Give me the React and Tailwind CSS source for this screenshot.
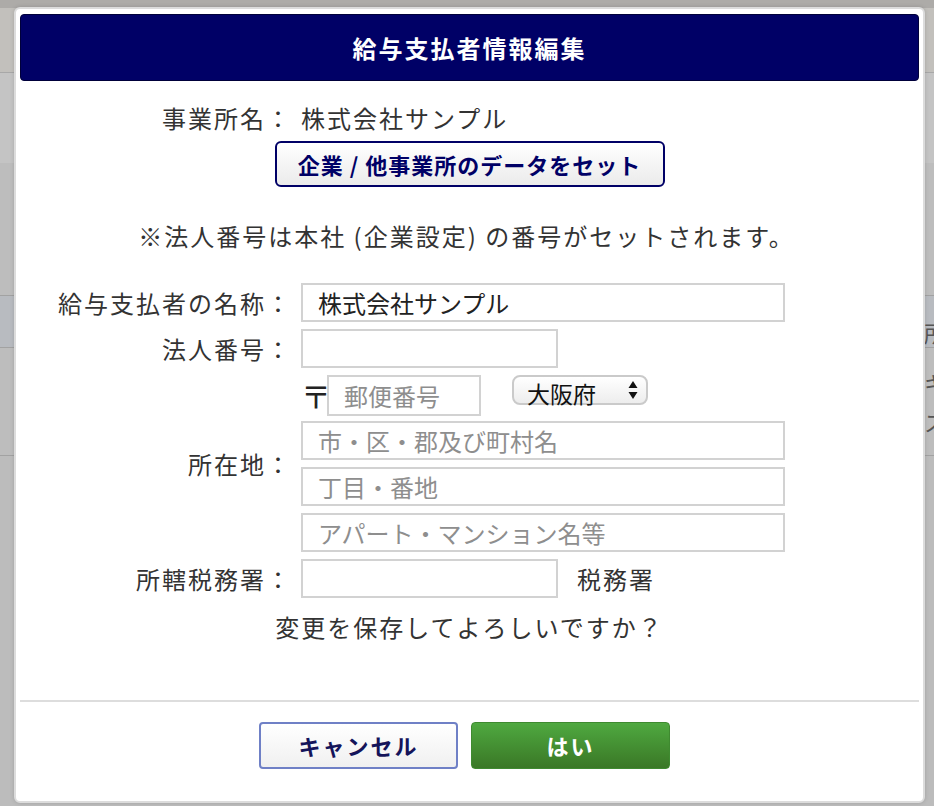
import React from 'react';

const jp = "[font-family:'Noto_Sans_CJK_JP','Noto_Sans',sans-serif]";

function TextField({ value = '', placeholder = '', className = '' }) {
  return (
    <input
      readOnly
      value={value}
      placeholder={placeholder}
      className={`h-[39px] border-2 border-[#d2d2d2] bg-white px-[15px] text-[24px] text-[#222] outline-none placeholder:text-[#8e8e8e] ${jp} ${className}`}
    />
  );
}

function Label({ children, className = '' }) {
  return (
    <div className={`flex items-center justify-end text-[24px] tracking-[2px] text-[#333] ${className}`}>
      {children}
    </div>
  );
}

function PrefSelect({ value }) {
  return (
    <div className="flex h-[30px] w-[136px] items-center justify-between rounded-[8px] border-2 border-[#cacaca] bg-linear-to-b from-white to-[#ededed] pl-[13px] pr-[8px]">
      <span className="pt-[6px] text-[23px] leading-none text-[#111]">{value}</span>
      <svg width="10" height="20" viewBox="0 0 10 20" aria-hidden="true">
        <path d="M5 1 L9.5 8 H0.5 Z" fill="#111" />
        <path d="M5 19 L9.5 12 H0.5 Z" fill="#111" />
      </svg>
    </div>
  );
}

export default function App() {
  return (
    <div className={`relative h-[806px] w-full overflow-hidden bg-[#bcbcbc] ${jp}`}>
      {/* dimmed page behind the dialog */}
      <div className="h-[8px] bg-[#adaba8]" />
      <div className="h-[64px] bg-[#c2c0bc]" />
      <div className="h-px bg-[#a8a8a8]" />
      <div className="h-[90px] bg-[#c4c4c4]" />
      <div className="h-[132px] bg-[#bdbdbd]" />
      <div className="h-px bg-[#a2a2a2]" />
      <div className="flex h-[51px] items-center whitespace-nowrap bg-[#b8bbc0] pl-[924px] pt-[22px] text-[22px] text-[#555]">
        所在地
      </div>
      <div className="h-px bg-[#a2a2a2]" />
      <div className="flex h-[107px] flex-col justify-center gap-[6px] whitespace-nowrap bg-[#bdbdbd] pl-[924px] text-[22px] text-[#555]">
        <span>キャンセル</span>
        <span>スタッフ</span>
      </div>
      <div className="h-px bg-[#a2a2a2]" />

      {/* dialog */}
      <div className="absolute left-[14px] top-[7px] flex h-[796px] w-[911px] flex-col rounded-[6px] border-2 border-[#dcdcdc] bg-white px-[4px] pt-[5px] shadow-[0_0_4px_rgba(0,0,0,0.15)]">
        <div className="flex h-[67px] items-center justify-center rounded-[4px] border border-[#00003a] bg-[#000066]">
          <h2 className="text-[24px] font-bold tracking-[2px] text-white">給与支払者情報編集</h2>
        </div>

        <div className="mt-[19px] grid grid-cols-[272px_1fr] gap-x-[9px] text-[24px] leading-[36px] tracking-[2px] text-[#333]">
          <div className="text-right">事業所名：</div>
          <div>株式会社サンプル</div>
        </div>

        <div className="mt-[5px] flex justify-center">
          <button className="h-[46px] w-[390px] rounded-[6px] border-2 border-[#000066] bg-linear-to-b from-white to-[#ebebeb] text-[22px] font-bold tracking-[1px] text-[#000066]">
            企業 / 他事業所のデータをセット
          </button>
        </div>

        <p className="mt-[31px] pr-[6px] text-center text-[24px] leading-[36px] tracking-[2px] text-[#333]">
          ※法人番号は本社 (企業設定) の番号がセットされます。
        </p>

        <div className="mt-[29px] grid grid-cols-[272px_1fr] gap-x-[9px] gap-y-[7px]">
          <Label>給与支払者の名称：</Label>
          <TextField value="株式会社サンプル" className="w-[484px]" />

          <Label>法人番号：</Label>
          <TextField className="w-[257px]" />

          <Label className="row-span-4">所在地：</Label>
          <div className="flex h-[39px] items-start">
            <span className="flex h-[39px] w-[26px] items-center text-[30px] leading-none text-[#222]">〒</span>
            <TextField placeholder="郵便番号" className="h-[41px] w-[154px]" />
            <div className="ml-[31px]">
              <PrefSelect value="大阪府" />
            </div>
          </div>
          <TextField placeholder="市・区・郡及び町村名" className="w-[484px]" />
          <TextField placeholder="丁目・番地" className="w-[484px]" />
          <TextField placeholder="アパート・マンション名等" className="w-[484px]" />

          <Label>所轄税務署：</Label>
          <div className="flex items-center">
            <TextField className="w-[257px]" />
            <span className="ml-[19px] text-[24px] tracking-[2px] text-[#333]">税務署</span>
          </div>
        </div>

        <p className="mt-[11px] text-center text-[24px] leading-[36px] tracking-[2px] text-[#333]">
          変更を保存してよろしいですか？
        </p>

        <div className="mt-[55px] h-[2px] bg-[#dddddd]" />

        <div className="mt-[20px] flex justify-center gap-[13px] pr-[10px]">
          <button className="h-[47px] w-[199px] rounded-[4px] border-2 border-[#6f80c6] bg-linear-to-b from-white to-[#f0f0f0] text-[22px] font-bold tracking-[2px] text-[#14145a]">
            キャンセル
          </button>
          <button className="h-[47px] w-[199px] rounded-[4px] border border-[#3f8a30] bg-linear-to-b from-[#4fa940] to-[#3a7826] text-[22px] font-bold tracking-[2px] text-white">
            はい
          </button>
        </div>
      </div>
    </div>
  );
}
